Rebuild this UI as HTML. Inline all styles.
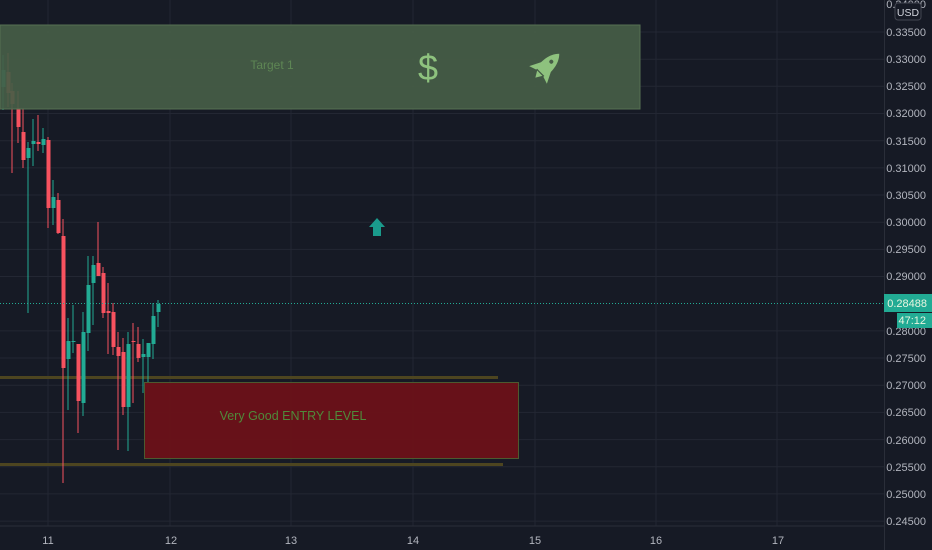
<!DOCTYPE html>
<html><head><meta charset="utf-8"><style>
html,body{margin:0;padding:0;background:#161a25;}
svg{display:block;font-family:"Liberation Sans",sans-serif;}
.c rect{stroke:none}
</style></head><body>
<svg width="932" height="550" viewBox="0 0 932 550" xmlns="http://www.w3.org/2000/svg">
<rect width="932" height="550" fill="#161a25"/>
<g stroke="#232733" stroke-width="1">
<line x1="0" y1="32" x2="884" y2="32"/><line x1="0" y1="59.2" x2="884" y2="59.2"/><line x1="0" y1="86.3" x2="884" y2="86.3"/><line x1="0" y1="113.5" x2="884" y2="113.5"/><line x1="0" y1="140.7" x2="884" y2="140.7"/><line x1="0" y1="167.9" x2="884" y2="167.9"/><line x1="0" y1="195" x2="884" y2="195"/><line x1="0" y1="222.2" x2="884" y2="222.2"/><line x1="0" y1="249.4" x2="884" y2="249.4"/><line x1="0" y1="276.5" x2="884" y2="276.5"/><line x1="0" y1="330.9" x2="884" y2="330.9"/><line x1="0" y1="358" x2="884" y2="358"/><line x1="0" y1="385.2" x2="884" y2="385.2"/><line x1="0" y1="412.4" x2="884" y2="412.4"/><line x1="0" y1="439.6" x2="884" y2="439.6"/><line x1="0" y1="466.7" x2="884" y2="466.7"/><line x1="0" y1="493.9" x2="884" y2="493.9"/><line x1="0" y1="521.1" x2="884" y2="521.1"/>
<line x1="48" y1="0" x2="48" y2="526"/><line x1="170" y1="0" x2="170" y2="526"/><line x1="291" y1="0" x2="291" y2="526"/><line x1="413" y1="0" x2="413" y2="526"/><line x1="535" y1="0" x2="535" y2="526"/><line x1="656" y1="0" x2="656" y2="526"/><line x1="777" y1="0" x2="777" y2="526"/>
</g>
<line x1="0" y1="526" x2="884" y2="526" stroke="#2a2e39"/>
<line x1="884.5" y1="0" x2="884.5" y2="550" stroke="#2a2e39"/>

<rect x="0" y="376" width="498" height="3" fill="#4d4520"/>
<rect x="0" y="463" width="503" height="3" fill="#4d4520"/>

<g class="c" stroke-width="1">
<g fill="#22ab94" stroke="#22ab94">
<line x1="3" y1="55" x2="3" y2="110"/><rect x="1.5" y="70" width="4" height="17"/>
<line x1="28" y1="142" x2="28" y2="313"/><rect x="26.5" y="148" width="4" height="10"/>
<line x1="33" y1="119" x2="33" y2="166"/><rect x="31.5" y="141" width="4" height="3"/>
<line x1="43" y1="128" x2="43" y2="153"/><rect x="41.5" y="139" width="4" height="6"/>
<line x1="53" y1="180" x2="53" y2="225"/><rect x="51.5" y="197" width="4" height="11"/>
<line x1="68" y1="318" x2="68" y2="410"/><rect x="66.5" y="341" width="4" height="18"/>
<line x1="73" y1="305" x2="73" y2="353"/><rect x="71.5" y="341" width="4" height="1"/>
<line x1="83" y1="312" x2="83" y2="416"/><rect x="81.5" y="332" width="4" height="71"/>
<line x1="88" y1="256" x2="88" y2="351"/><rect x="86.5" y="285" width="4" height="48"/>
<line x1="93" y1="256" x2="93" y2="325"/><rect x="91.5" y="265" width="4" height="18"/>
<line x1="128" y1="332" x2="128" y2="451"/><rect x="126.5" y="344" width="4" height="63"/>
<line x1="143" y1="339" x2="143" y2="393"/><rect x="141.5" y="354" width="4" height="3"/>
<line x1="148" y1="343" x2="148" y2="383"/><rect x="146.5" y="343" width="4" height="14"/>
<line x1="153" y1="303" x2="153" y2="359"/><rect x="151.5" y="316" width="4" height="28"/>
<line x1="158" y1="300" x2="158" y2="327"/><rect x="156.5" y="304" width="4" height="8"/>
</g>
<g fill="#f7525f" stroke="#f7525f">
<line x1="8" y1="53" x2="8" y2="107"/><rect x="6.5" y="72" width="4" height="21"/>
<line x1="12" y1="83" x2="12" y2="173"/><rect x="10.5" y="91" width="4" height="13"/>
<line x1="18" y1="91" x2="18" y2="143"/><rect x="16.5" y="108" width="4" height="19"/>
<line x1="23" y1="108" x2="23" y2="168"/><rect x="21.5" y="132" width="4" height="28"/>
<line x1="38" y1="115" x2="38" y2="151"/><rect x="36.5" y="142" width="4" height="2"/>
<line x1="48" y1="137" x2="48" y2="228"/><rect x="46.5" y="140" width="4" height="68"/>
<line x1="58" y1="193" x2="58" y2="234"/><rect x="56.5" y="200" width="4" height="33"/>
<line x1="63" y1="219" x2="63" y2="483"/><rect x="61.5" y="236" width="4" height="132"/>
<line x1="78" y1="344" x2="78" y2="433"/><rect x="76.5" y="344" width="4" height="57"/>
<line x1="98" y1="222" x2="98" y2="276"/><rect x="96.5" y="263" width="4" height="13"/>
<line x1="103" y1="267" x2="103" y2="318"/><rect x="101.5" y="273" width="4" height="40"/>
<line x1="108" y1="283" x2="108" y2="354"/><rect x="106.5" y="311" width="4" height="2"/>
<line x1="113" y1="303" x2="113" y2="355"/><rect x="111.5" y="312" width="4" height="35"/>
<line x1="118" y1="332" x2="118" y2="450"/><rect x="116.5" y="347" width="4" height="9"/>
<line x1="123" y1="338" x2="123" y2="415"/><rect x="121.5" y="352" width="4" height="55"/>
<line x1="133" y1="323" x2="133" y2="403"/><rect x="131.5" y="341" width="4" height="1"/>
<line x1="138" y1="327" x2="138" y2="362"/><rect x="136.5" y="344" width="4" height="14"/>
</g>
</g>

<rect x="0" y="25" width="640" height="84" fill="#465d47" fill-opacity="0.92" stroke="#557052" stroke-width="1"/>
<text x="272" y="69" font-size="12" fill="#5e8654" text-anchor="middle">Target 1</text>
<text x="428" y="80" font-size="36" fill="#8ec27e" text-anchor="middle">$</text>
<g transform="translate(546,67) rotate(45) scale(1.25)" fill="#8ec27e">
<path d="M0,-15 C6,-9 6,0 5,6 L-5,6 C-6,0 -6,-9 0,-15 Z"/>
<path d="M-5,-1 L-10,9 L-4,7 Z"/><path d="M5,-1 L10,9 L4,7 Z"/>
<path d="M-3,7 L0,12 L3,7 Z"/>
<circle cx="0" cy="-6" r="1.6" fill="#465d47"/>
</g>

<rect x="144.5" y="382.5" width="374" height="76" fill="#6b1118" fill-opacity="0.95" stroke="#4d5a30" stroke-width="1"/>
<text x="293" y="420" font-size="12.5" fill="#4f8a3a" text-anchor="middle">Very Good ENTRY LEVEL</text>

<path d="M377,218 L385,227 L381,227 L381,236 L373,236 L373,227 L369,227 Z" fill="#1a9b8c"/>

<line x1="0" y1="303.5" x2="884" y2="303.5" stroke="#22ab94" stroke-width="1" stroke-dasharray="1,2"/>

<g font-size="11" fill="#b2b5be" text-anchor="end">
<text x="926" y="8">0.34000</text>
<text x="926" y="36">0.33500</text><text x="926" y="63">0.33000</text><text x="926" y="90">0.32500</text><text x="926" y="117">0.32000</text><text x="926" y="145">0.31500</text><text x="926" y="172">0.31000</text><text x="926" y="199">0.30500</text><text x="926" y="226">0.30000</text><text x="926" y="253">0.29500</text><text x="926" y="280">0.29000</text><text x="926" y="335">0.28000</text><text x="926" y="362">0.27500</text><text x="926" y="389">0.27000</text><text x="926" y="416">0.26500</text><text x="926" y="444">0.26000</text><text x="926" y="471">0.25500</text><text x="926" y="498">0.25000</text><text x="926" y="525">0.24500</text>
</g>
<rect x="895" y="3" width="26" height="17" rx="3" fill="#161a25" stroke="#434651"/>
<text x="908" y="16" font-size="10.5" fill="#d1d4dc" text-anchor="middle">USD</text>
<rect x="884" y="294" width="48" height="18" fill="#22ab94"/>
<text x="927" y="307" font-size="11" fill="#e8f5e0" text-anchor="end">0.28488</text>
<rect x="897" y="313" width="35" height="15" fill="#22ab94"/>
<text x="926" y="324" font-size="11" fill="#e8f5e0" text-anchor="end">47:12</text>

<g font-size="11" fill="#b2b5be" text-anchor="middle">
<text x="48" y="544">11</text><text x="171" y="544">12</text><text x="291" y="544">13</text><text x="413" y="544">14</text><text x="535" y="544">15</text><text x="656" y="544">16</text><text x="778" y="544">17</text>
</g>
</svg>
</body></html>
